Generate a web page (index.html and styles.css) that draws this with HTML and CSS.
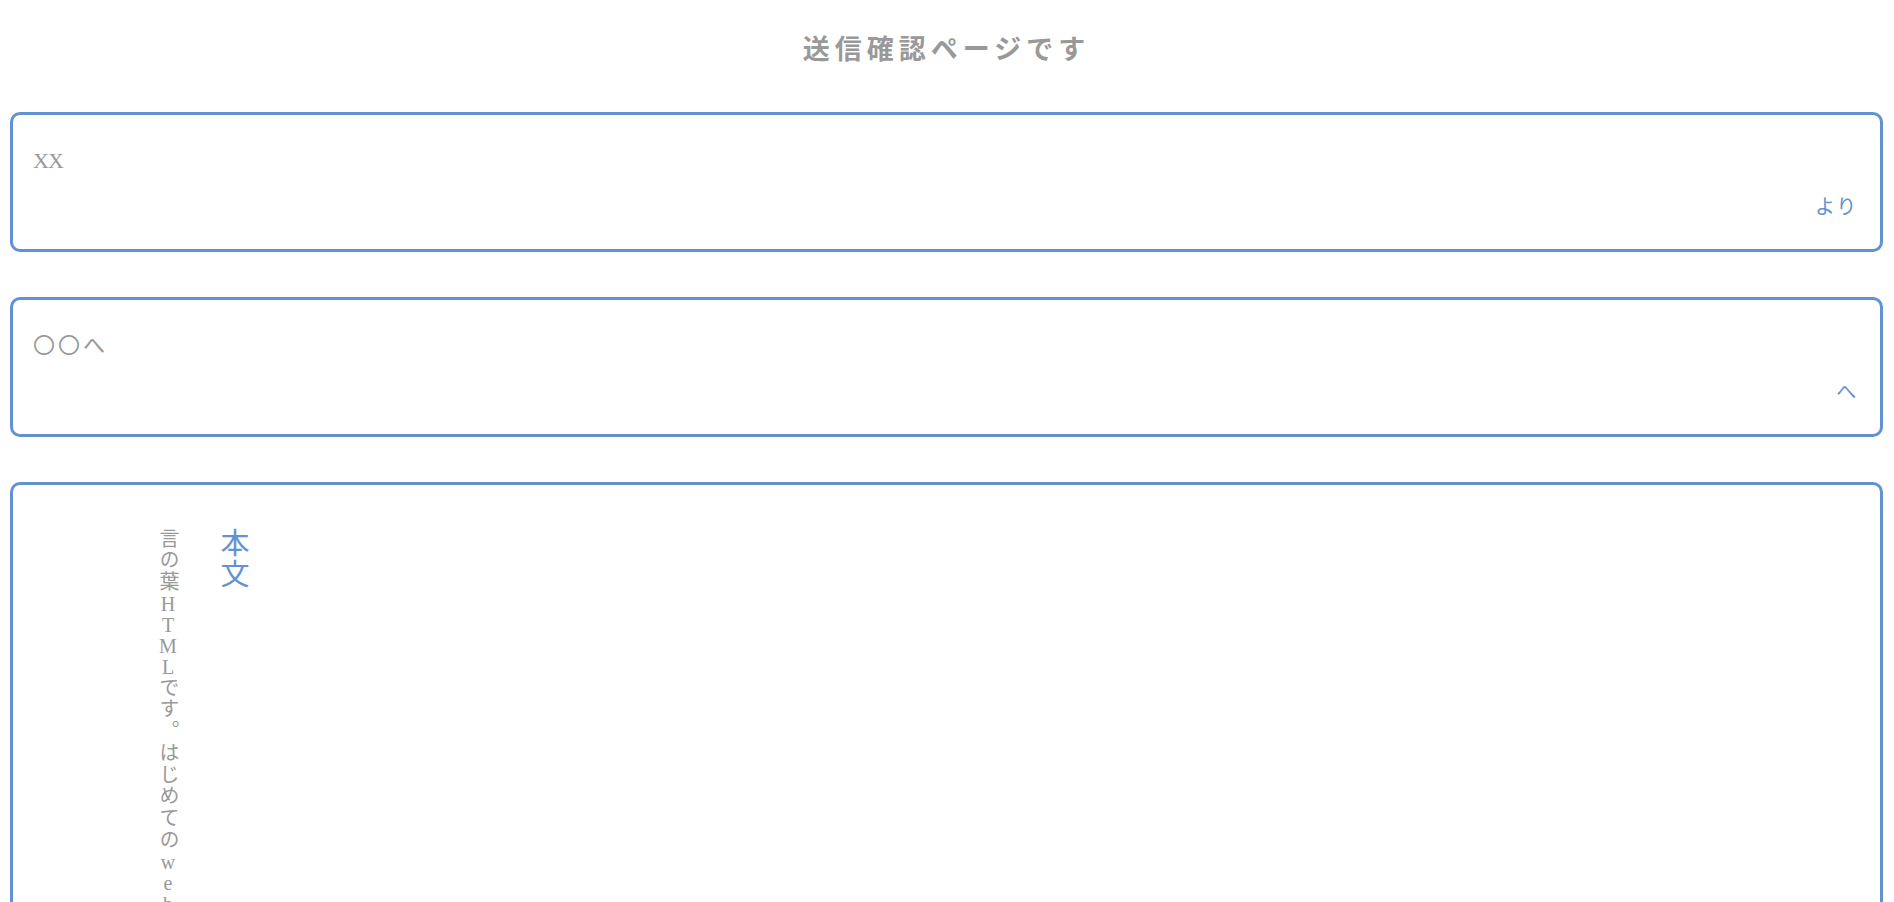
FILE: index.html
```html
<!DOCTYPE html>
<html lang="ja">

<head>
  <meta charset="UTF-8">
  <meta name="viewport" content="width=device-width, initial-scale=1.0">
  <title>送信確認</title>
  <link rel="stylesheet" href="styles.css">
</head>

<body>
  <h1 class="page-title">送信確認ページです</h1>

  <div class="field">
    <p class="field-value latin">XX</p>
    <p class="field-label">より</p>
  </div>

  <div class="field">
    <p class="field-value">〇〇へ</p>
    <p class="field-label">へ</p>
  </div>

  <div class="field letter">
    <div class="letter-body">
      <h2>本文</h2>
      <p>言の葉<span class="latin">HTML</span>です。はじめての<span class="latin">web</span>サイトをつくりました。</p>
    </div>
  </div>
</body>

</html>
```

FILE: styles.css
```css
*,
*::before,
*::after {
  box-sizing: border-box;
}

body {
  margin: 0;
  padding: 0 11px 40px 10px;
  font-family: "Liberation Serif", "Noto Sans CJK JP", serif;
  color: #999;
  background: #fff;
  text-autospace: no-autospace;
}

.page-title {
  margin: 28px 0 44px;
  font-family: "Noto Sans CJK JP", sans-serif;
  font-size: 27px;
  font-weight: 700;
  line-height: 40px;
  letter-spacing: 5px;
  text-align: center;
  color: #999;
}

.field {
  display: flex;
  flex-direction: column;
  justify-content: space-between;
  height: 140px;
  margin-bottom: 45px;
  padding: 28px 22px 28px 20px;
  border: 3px solid #6292d2;
  border-radius: 10px;
}

.field p {
  margin: 0;
}

.field-value {
  font-size: 22px;
  line-height: 36px;
  letter-spacing: 3px;
}

.field-value.latin {
  letter-spacing: -1px;
}

.field-label {
  font-family: "Noto Sans CJK JP", sans-serif;
  font-size: 20px;
  line-height: 30px;
  letter-spacing: 1.7px;
  text-align: right;
  color: #6292d2;
}

.letter {
  display: flex;
  flex-direction: row;
  justify-content: flex-start;
  height: 720px;
  padding: 43px 0 0 140px;
}

.letter-body {
  writing-mode: vertical-rl;
  text-orientation: upright;
  height: 660px;
}

.letter-body h2 {
  margin: 0 0 0 30px;
  font-family: "Noto Sans CJK JP", sans-serif;
  font-size: 29px;
  font-weight: 400;
  line-height: 44px;
  letter-spacing: 2px;
  color: #6292d2;
}

.letter-body p {
  margin: 0;
  font-size: 20px;
  line-height: 30px;
  letter-spacing: 1.7px;
}

.letter-body .latin {
  letter-spacing: -1px;
}
```
